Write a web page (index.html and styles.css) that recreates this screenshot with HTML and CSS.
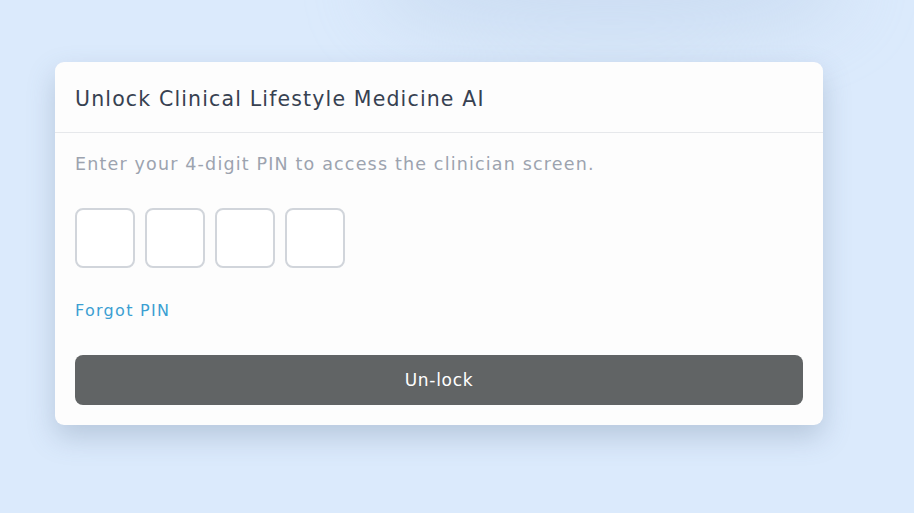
FILE: index.html
```html
<!DOCTYPE html>
<html lang="en">
<head>
<meta charset="utf-8">
<title>Unlock</title>
<link rel="stylesheet" href="styles.css">
</head>
<body>
<div class="page">
  <div class="glow"></div>
  <div class="card">
    <div class="card-header">
      <h1 class="title">Unlock Clinical Lifestyle Medicine AI</h1>
    </div>
    <div class="card-body">
      <p class="subtitle">Enter your 4-digit PIN to access the clinician screen.</p>
      <div class="pin-row">
        <input class="pin" type="password" maxlength="1">
        <input class="pin" type="password" maxlength="1">
        <input class="pin" type="password" maxlength="1">
        <input class="pin" type="password" maxlength="1">
      </div>
      <a class="forgot" href="#">Forgot PIN</a>
      <button class="unlock" type="button">Un-lock</button>
    </div>
  </div>
</div>
</body>
</html>
```
FILE: styles.css
```css
* { box-sizing: border-box; }
html, body {
  margin: 0;
  height: 100%;
}
body {
  background: #dbeafc;
  font-family: "DejaVu Sans", "Open Sans", sans-serif;
  overflow: hidden;
}
.page {
  position: relative;
  height: 100%;
  padding: 62px 91px 0 55px;
}
.glow {
  position: absolute;
  left: 370px;
  top: -75px;
  width: 480px;
  height: 120px;
  border-radius: 50%;
  background: rgba(185, 205, 230, 0.4);
  filter: blur(34px);
  z-index: 0;
}
.card {
  position: relative;
  z-index: 1;
  width: 768px;
  background: #fdfdfd;
  border-radius: 9px;
  box-shadow: 0 12px 28px rgba(90, 110, 140, 0.28);
}
.card-header {
  height: 71px;
  padding: 4px 20px 0;
  display: flex;
  align-items: center;
  border-bottom: 1px solid #e6e8eb;
}
.title {
  margin: 0;
  font-size: 20.5px;
  font-weight: 400;
  color: #374151;
  letter-spacing: 1.15px;
}
.card-body {
  padding: 19px 20px 20px;
  display: flex;
  flex-direction: column;
}
.subtitle {
  margin: 0;
  font-size: 17.5px;
  color: #9ca3af;
  line-height: 24px;
  letter-spacing: 1.17px;
}
.pin-row {
  display: flex;
  gap: 10px;
  margin-top: 32px;
}
.pin {
  width: 60px;
  height: 60px;
  border: 2px solid #d1d5db;
  border-radius: 8px;
  background: #fff;
  outline: none;
  text-align: center;
  font-size: 24px;
}
.forgot {
  margin-top: 32px;
  font-size: 16px;
  line-height: 22px;
  color: #3b9fd2;
  text-decoration: none;
  align-self: flex-start;
  letter-spacing: 1.3px;
}
.unlock {
  margin-top: 33px;
  height: 50px;
  border: none;
  border-radius: 8px;
  background: #616465;
  color: #fff;
  font-family: inherit;
  font-size: 17px;
  font-weight: 500;
  letter-spacing: 0.7px;
}
```
